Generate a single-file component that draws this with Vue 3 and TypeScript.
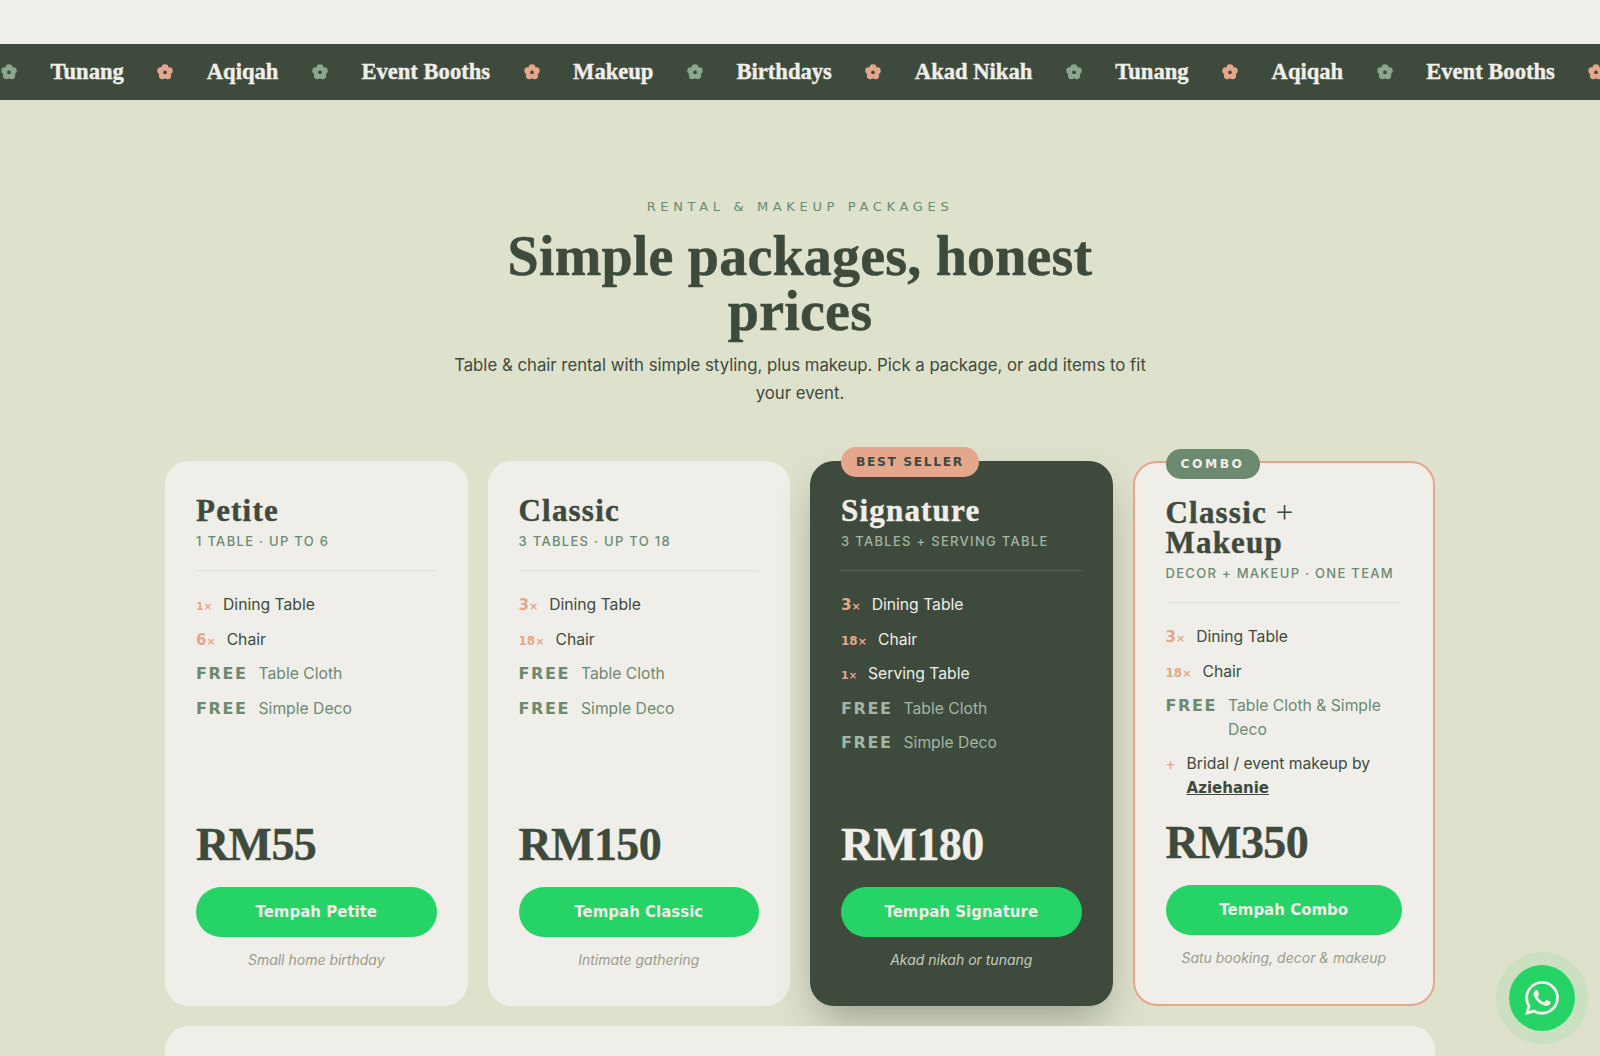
<template>
  <div class="page">
    <div class="top-band"></div>
    <div class="strip">
      <div class="strip-track">
        <template v-for="(word, i) in marquee" :key="i">
          <svg class="flower" :class="i % 2 ? 'peach' : 'sage'" viewBox="0 0 24 24">
            <circle cx="12" cy="5.6" r="5.2" />
            <circle cx="18.4" cy="10.2" r="5.2" />
            <circle cx="16" cy="17.8" r="5.2" />
            <circle cx="8" cy="17.8" r="5.2" />
            <circle cx="5.6" cy="10.2" r="5.2" />
            <circle class="eye" cx="12" cy="12.4" r="2.8" />
          </svg>
          <span class="word">{{ word }}</span>
        </template>
        <svg class="flower peach" viewBox="0 0 24 24">
          <circle cx="12" cy="5.6" r="5.2" />
          <circle cx="18.4" cy="10.2" r="5.2" />
          <circle cx="16" cy="17.8" r="5.2" />
          <circle cx="8" cy="17.8" r="5.2" />
          <circle cx="5.6" cy="10.2" r="5.2" />
          <circle class="eye" cx="12" cy="12.4" r="2.8" />
        </svg>
      </div>
    </div>

    <section class="packages">
      <header class="intro">
        <p class="eyebrow">RENTAL &amp; MAKEUP PACKAGES</p>
        <h1>Simple packages, honest prices</h1>
        <p class="lead">Table &amp; chair rental with simple styling, plus makeup. Pick a package, or add items to fit your event.</p>
      </header>

      <div class="grid">
        <article v-for="p in plans" :key="p.cta" class="card" :class="p.kind">
          <span v-if="p.badge" class="badge">{{ p.badge }}</span>
          <h3>{{ p.name }}<span v-if="p.plus" class="plus"> + </span>{{ p.plus }}</h3>
          <p class="sub">{{ p.sub }}</p>
          <hr />
          <ul>
            <li v-for="it in p.items" :key="it.label" :class="{ free: it.tag === 'FREE' }">
              <span class="tag" :class="it.size">{{ it.tag }}<small v-if="it.x">×</small></span>
              <span class="label">{{ it.label }}<a v-if="it.link" class="link">{{ it.link }}</a></span>
            </li>
          </ul>
          <div class="price">{{ p.price }}</div>
          <button class="cta">{{ p.cta }}</button>
          <p class="note">{{ p.note }}</p>
        </article>
      </div>

      <div class="next-card"></div>
    </section>

    <a class="wa">
      <svg viewBox="0 0 24 24" width="34" height="34" fill="#f0eee8">
        <path d="M17.472 14.382c-.297-.149-1.758-.867-2.03-.967-.273-.099-.471-.148-.67.15-.197.297-.767.966-.94 1.164-.173.199-.347.223-.644.075-.297-.15-1.255-.463-2.39-1.475-.883-.788-1.48-1.761-1.653-2.059-.173-.297-.018-.458.13-.606.134-.133.298-.347.446-.52.149-.174.198-.298.298-.497.099-.198.05-.371-.025-.52-.075-.149-.669-1.612-.916-2.207-.242-.579-.487-.5-.669-.51-.173-.008-.371-.01-.57-.01-.198 0-.52.074-.792.372-.272.297-1.04 1.016-1.04 2.479 0 1.462 1.065 2.875 1.213 3.074.149.198 2.096 3.2 5.077 4.487.709.306 1.262.489 1.694.625.712.227 1.36.195 1.871.118.571-.085 1.758-.719 2.006-1.413.248-.694.248-1.289.173-1.413-.074-.124-.272-.198-.57-.347m-5.421 7.403h-.004a9.87 9.87 0 01-5.031-1.378l-.361-.214-3.741.982.998-3.648-.235-.374a9.86 9.86 0 01-1.51-5.26c.001-5.45 4.436-9.884 9.888-9.884 2.64 0 5.122 1.03 6.988 2.898a9.825 9.825 0 012.893 6.994c-.003 5.45-4.437 9.884-9.885 9.884m8.413-18.297A11.815 11.815 0 0012.05 0C5.495 0 .16 5.335.157 11.892c0 2.096.547 4.142 1.588 5.945L.057 24l6.305-1.654a11.882 11.882 0 005.683 1.448h.005c6.554 0 11.89-5.335 11.893-11.893a11.821 11.821 0 00-3.48-8.413z" />
      </svg>
    </a>
  </div>
</template>

<script setup lang="ts">
interface Item { tag: string; x?: boolean; size?: string; label: string; link?: string }
interface Plan {
  name: string; plus?: string; kind?: string; badge?: string; sub: string
  items: Item[]; price: string; cta: string; note: string
}

const marquee = ['Tunang', 'Aqiqah', 'Event Booths', 'Makeup', 'Birthdays', 'Akad Nikah', 'Tunang', 'Aqiqah', 'Event Booths']

const plans: Plan[] = [
  {
    name: 'Petite', sub: '1 TABLE · UP TO 6',
    items: [
      { tag: '1', x: true, size: 'xs', label: 'Dining Table' },
      { tag: '6', x: true, label: 'Chair' },
      { tag: 'FREE', label: 'Table Cloth' },
      { tag: 'FREE', label: 'Simple Deco' }
    ],
    price: 'RM55', cta: 'Tempah Petite', note: 'Small home birthday'
  },
  {
    name: 'Classic', sub: '3 TABLES · UP TO 18',
    items: [
      { tag: '3', x: true, label: 'Dining Table' },
      { tag: '18', x: true, size: 'sm', label: 'Chair' },
      { tag: 'FREE', label: 'Table Cloth' },
      { tag: 'FREE', label: 'Simple Deco' }
    ],
    price: 'RM150', cta: 'Tempah Classic', note: 'Intimate gathering'
  },
  {
    name: 'Signature', kind: 'dark', badge: 'BEST SELLER', sub: '3 TABLES + SERVING TABLE',
    items: [
      { tag: '3', x: true, label: 'Dining Table' },
      { tag: '18', x: true, size: 'sm', label: 'Chair' },
      { tag: '1', x: true, size: 'xs', label: 'Serving Table' },
      { tag: 'FREE', label: 'Table Cloth' },
      { tag: 'FREE', label: 'Simple Deco' }
    ],
    price: 'RM180', cta: 'Tempah Signature', note: 'Akad nikah or tunang'
  },
  {
    name: 'Classic', plus: 'Makeup', kind: 'combo', badge: 'COMBO', sub: 'DECOR + MAKEUP · ONE TEAM',
    items: [
      { tag: '3', x: true, label: 'Dining Table' },
      { tag: '18', x: true, size: 'sm', label: 'Chair' },
      { tag: 'FREE', label: 'Table Cloth & Simple Deco' },
      { tag: '+', size: 'sm', label: 'Bridal / event makeup by ', link: 'Aziehanie' }
    ],
    price: 'RM350', cta: 'Tempah Combo', note: 'Satu booking, decor & makeup'
  }
]
</script>

<style>
html, body { margin: 0; background: #dee1cc; }
</style>

<style scoped>
.page { height: 1056px; overflow: hidden; background: #dee1cc; font-family: Inter, "Liberation Sans", sans-serif; color: #3d4a3c; }
.top-band { height: 44px; background: #f0eee8; }

.strip { height: 56px; background: #3d4a3c; overflow: hidden; display: flex; align-items: center; }
.strip-track { display: flex; align-items: center; gap: 33.5px; white-space: nowrap; transform: translateX(1px); }
.word { font-family: "Liberation Serif", serif; font-weight: 700; font-size: 22.6px; color: #f0eee8; -webkit-text-stroke: 0.4px #f0eee8; }
.flower { width: 16px; height: 16px; flex: none; }
.flower.sage { fill: #8ba88f; }
.flower.peach { fill: #e5a78c; }
.flower .eye { fill: #3d4a3c; }

.packages { display: flex; flex-direction: column; align-items: center; padding-top: 97px; }
.intro { width: 720px; text-align: center; }
.eyebrow { margin: 0; font-family: "DejaVu Sans", sans-serif; font-size: 13px; line-height: 20px; letter-spacing: 4.65px; color: #6b8a70; }
h1 { margin: 12px auto 0; width: 620px; font-family: "Liberation Serif", serif; font-weight: 700; font-size: 56px; line-height: 55px; letter-spacing: 0.2px; color: #3d4a3c; -webkit-text-stroke: 0.5px #3d4a3c; }
.lead { margin: 12px 0 0; font-size: 16.75px; line-height: 28px; color: #3d4a3c; }

.grid { width: 1270px; margin-top: 54px; display: grid; grid-template-columns: repeat(4, 1fr); gap: 20px; height: 545px; }
.card { position: relative; box-sizing: border-box; display: flex; flex-direction: column; padding: 35px 31px 36px; background: #f0eee8; border-radius: 24px; }
.card.dark { background: #3d4a3c; color: #f0eee8; box-shadow: 0 20px 40px -8px rgba(61, 74, 60, 0.42); }
.card.combo { border: 2px solid #e5a78c; }

.badge { position: absolute; top: -14px; left: 31px; height: 30px; padding: 0 15px; display: flex; align-items: center; border-radius: 15px; font-family: "DejaVu Sans", sans-serif; font-weight: 700; font-size: 12.3px; letter-spacing: 1.6px; background: #e5a78c; color: #3d4a3c; }
.combo .badge { background: #6b8a70; color: #f0eee8; letter-spacing: 2.5px; }

h3 { margin: 0; font-family: "Liberation Serif", serif; font-weight: 700; font-size: 31px; line-height: 30px; letter-spacing: 1.2px; -webkit-text-stroke: 0.4px currentColor; }
.plus { font-weight: 400; -webkit-text-stroke: 0; }
.sub { margin: 5px 0 0; font-size: 13px; line-height: 20px; font-weight: 500; letter-spacing: 1.3px; color: #6b8a70; }
.dark .sub { color: #a3b5a3; }
hr { width: 100%; margin: 19px 0 0; border: 0; border-top: 1px solid #e3e2d8; }
.dark hr { border-top-color: #566355; }

ul { list-style: none; margin: 22px 0 0; padding: 0; display: flex; flex-direction: column; gap: 11px; }
li { display: flex; align-items: baseline; gap: 11px; font-size: 15.7px; line-height: 23.5px; }
.tag { flex: none; font-family: "DejaVu Sans", sans-serif; font-weight: 700; font-size: 15px; line-height: 1; color: #e5a78c; }
.tag.sm { font-size: 12px; }
.tag.xs { font-size: 11px; }
.tag small { font-size: 11px; }
.tag.xs small { font-size: 10px; }
li.free { color: #6b8a70; }
li.free .tag { color: #6b8a70; font-size: 16px; letter-spacing: 1.6px; }
.dark li.free, .dark li.free .tag { color: #a3b5a3; }
.link { font-family: "DejaVu Sans", sans-serif; font-weight: 700; font-size: 15px; text-decoration: underline; }

.price { margin-top: auto; font-family: "Liberation Serif", serif; font-weight: 700; font-size: 46px; line-height: 56px; letter-spacing: -0.6px; -webkit-text-stroke: 0.4px currentColor; }
.cta { margin-top: 14px; height: 50px; border: 0; border-radius: 25px; background: #25d366; color: #f0eee8; font-family: "DejaVu Sans", sans-serif; font-weight: 700; font-size: 15px; }
.note { margin: 13px 0 0; text-align: center; font-style: italic; font-size: 14px; line-height: 20px; color: #9a9c8e; }
.dark .note { color: #c4cdbf; }

.next-card { position: relative; z-index: 1; width: 1270px; height: 120px; margin-top: 20px; background: #f0eee8; border-radius: 24px; flex: none; }

.wa { position: fixed; z-index: 2; right: 25px; bottom: 25px; width: 66px; height: 66px; border-radius: 50%; background: #25d366; display: flex; align-items: center; justify-content: center; box-shadow: 0 0 0 13px rgba(37, 211, 102, 0.1); }
</style>
